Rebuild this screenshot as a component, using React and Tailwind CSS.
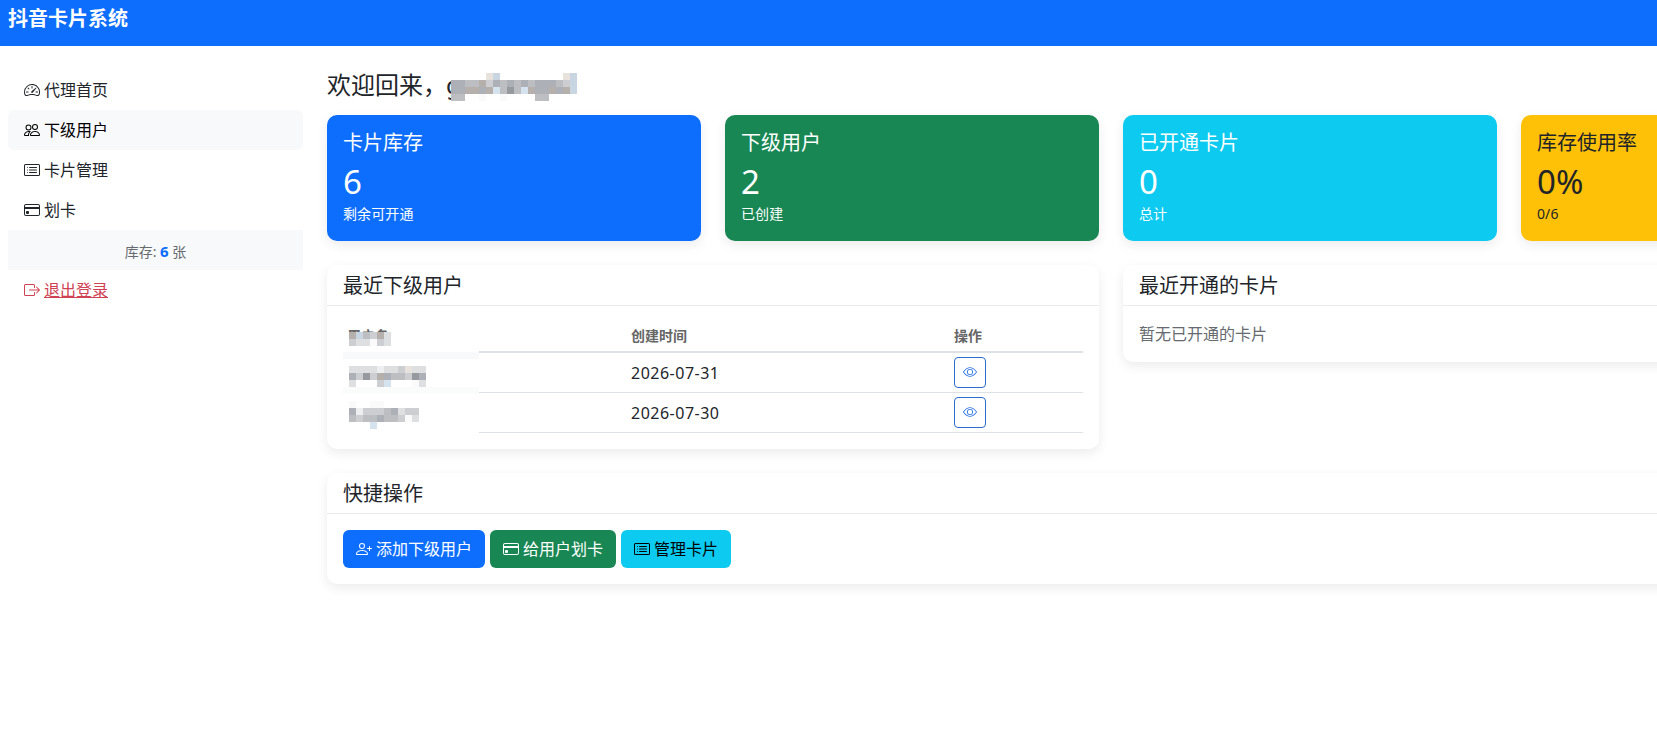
import React from "react";
import {
  BsSpeedometer2,
  BsPeople,
  BsCardList,
  BsCreditCard,
  BsBoxArrowRight,
  BsEye,
  BsPersonPlus,
} from "react-icons/bs";

const menu = [
  { label: "代理首页", icon: BsSpeedometer2 },
  { label: "下级用户", icon: BsPeople, active: true },
  { label: "卡片管理", icon: BsCardList },
  { label: "划卡", icon: BsCreditCard },
];

const stats = [
  { title: "卡片库存", value: "6", note: "剩余可开通", color: "bg-[#0d6efd] text-white" },
  { title: "下级用户", value: "2", note: "已创建", color: "bg-[#198754] text-white" },
  { title: "已开通卡片", value: "0", note: "总计", color: "bg-[#0dcaf0] text-white" },
  { title: "库存使用率", value: "0%", note: "0/6", color: "bg-[#ffc107] text-[#212529]" },
];

// Private names are covered with 7px blocks, "." is an empty block
const shades = {
  a: "#96999e",
  b: "#adb0b6",
  c: "#bcbec2",
  d: "#cdced1",
  e: "#dedfe1",
  f: "#eeeff0",
  g: "#fafafa",
  l: "#c9d6e2",
  m: "#d5e3ee",
  w: "#b5b0ab",
  x: "#e8e2dc",
};

const welcomeMask = [
  ".....xl.........xl",
  "bbccwdbcbcbcbbbcdl",
  "bbwwbwmcacmwbbwbwl",
  "cc..g..g....cc....",
];
const headMask = ["wlcdwe", "deegde"];
const userMasks = [
  ["eeeefeedxee", "bdadwbccdab", "e...dm...ge"],
  ["g..gg.....", "bfdddcbedd", "cdccbccdge", "...m......"],
];

function Mosaic({ rows, className }) {
  const cols = rows[0].length;
  return (
    <svg
      className={className}
      width={cols * 7}
      height={rows.length * 7}
      shapeRendering="crispEdges"
    >
      {rows.map((row, y) =>
        row
          .split("")
          .map((s, x) =>
            shades[s] ? (
              <rect key={x + "-" + y} x={x * 7} y={y * 7} width="7" height="7" fill={shades[s]} />
            ) : null
          )
      )}
    </svg>
  );
}

function Card({ title, className = "", children }) {
  return (
    <div
      className={`rounded-[10px] bg-white shadow-[0_4px_12px_rgba(0,0,0,0.08)] ${className}`}
    >
      <div className="border-b border-[#ebebeb] px-4 pt-[9px] pb-[7px]">
        <h5 className="text-xl leading-6">{title}</h5>
      </div>
      <div className="p-4">{children}</div>
    </div>
  );
}

export default function App() {
  return (
    <div className="h-[731px] w-full overflow-hidden bg-white font-['Noto_Sans','Noto_Sans_CJK_SC',sans-serif] text-base leading-6 text-[#212529]">
      {/* Top bar */}
      <header className="h-[46px] bg-[#0d6efd] px-2 pt-1">
        <h1 className="text-xl leading-[30px] font-bold text-white">抖音卡片系统</h1>
      </header>

      <div className="flex">
        {/* Sidebar */}
        <nav className="ml-2 w-[295px] shrink-0 pt-6">
          {menu.map(({ label, icon: Icon, active }) => (
            <a
              key={label}
              className={`flex h-10 items-center gap-1 rounded-md px-4 ${
                active ? "bg-[#f8f9fa] text-black" : ""
              }`}
            >
              <Icon size={16} />
              {label}
            </a>
          ))}
          <div className="h-10 bg-[#f8f9fa] text-center text-sm leading-[42px] text-[#666b70]">
            库存: <b className="text-[15px] text-[#0d6efd]">6</b> 张
          </div>
          <a className="flex h-10 items-center gap-1 px-4 text-[#cf4253]">
            <BsBoxArrowRight size={16} />
            <span className="underline">退出登录</span>
          </a>
        </nav>

        {/* Main content, wider than the window */}
        <main className="ml-6 w-[1568px] shrink-0 pt-6">
          <h2 className="relative mb-2 flex h-[37px] items-start text-2xl leading-[29px]">
            欢迎回来，
            <span className="-ml-px">g</span>
            <Mosaic rows={welcomeMask} className="absolute top-[3px] left-[124px] bg-white" />
          </h2>

          <div className="grid grid-cols-4 gap-6">
            {stats.map((s) => (
              <div
                key={s.title}
                className={`h-[126px] rounded-[10px] p-4 shadow-[0_4px_12px_rgba(0,0,0,0.08)] ${s.color}`}
              >
                <h5 className="mb-2 text-xl leading-6">{s.title}</h5>
                <h2 className="text-[33px] leading-[38px]">{s.value}</h2>
                <p className="text-sm leading-[26px] tracking-[0.1px]">{s.note}</p>
              </div>
            ))}
          </div>

          <div className="mt-6 grid grid-cols-2 items-start gap-6">
            <Card title="最近下级用户">
              <div className="relative">
                <table className="w-full table-fixed text-left">
                  <thead className="text-sm leading-[21px] text-[#666]">
                    <tr className="border-b-2 border-[#dee2e6]">
                      <th className="w-[284px] px-1 pt-[3px] pb-[5px]">用户名</th>
                      <th className="w-[323px] px-1 pt-[3px] pb-[5px]">创建时间</th>
                      <th className="px-1 pt-[3px] pb-[5px]">操作</th>
                    </tr>
                  </thead>
                  <tbody>
                    {["2026-07-31", "2026-07-30"].map((date) => (
                      <tr key={date} className="h-10 border-b border-[#dee2e6]">
                        <td className="p-1"></td>
                        <td className="p-1 tracking-[0.5px]">{date}</td>
                        <td className="p-1">
                          <button className="flex h-[31px] w-8 items-center justify-center rounded border border-[#2a6dcc] pb-px text-[#2f74e0]">
                            <BsEye size={14} />
                          </button>
                        </td>
                      </tr>
                    ))}
                  </tbody>
                </table>
                {/* Cover over the user name column */}
                <div className="absolute top-[10px] left-0 h-[104px] w-[136px] bg-white">
                  <Mosaic rows={headMask} className="ml-[6px]" />
                  <div className="mt-[6px] h-[7px] bg-[#f8f9fa]" />
                  <Mosaic rows={userMasks[0]} className="mt-[7px] ml-[6px]" />
                  <div className="h-[7px] bg-[#fafbfb]" />
                  <Mosaic rows={userMasks[1]} className="mt-[7px] ml-[6px]" />
                </div>
              </div>
            </Card>
            <Card title="最近开通的卡片">
              <p className="text-[#666b70]">暂无已开通的卡片</p>
            </Card>
          </div>

          <Card title="快捷操作" className="mt-6">
            <div className="flex gap-[5px]">
              <button className="flex h-[38px] items-center gap-1 rounded-md bg-[#0d6efd] px-[13px] text-white">
                <BsPersonPlus size={16} />
                添加下级用户
              </button>
              <button className="flex h-[38px] items-center gap-1 rounded-md bg-[#198754] px-[13px] text-white">
                <BsCreditCard size={16} />
                给用户划卡
              </button>
              <button className="flex h-[38px] items-center gap-1 rounded-md bg-[#0dcaf0] px-[13px] text-black">
                <BsCardList size={16} />
                管理卡片
              </button>
            </div>
          </Card>
        </main>
      </div>
    </div>
  );
}
